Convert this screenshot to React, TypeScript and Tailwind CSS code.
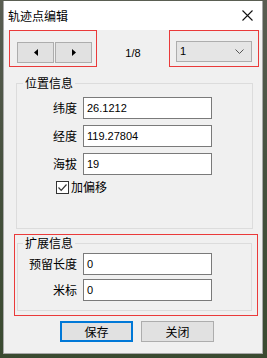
import React from "react";

const cjk = { fontFamily: '"Noto Sans CJK SC", "Microsoft YaHei", sans-serif' };
const lat = { fontFamily: '"Liberation Sans", Arial, sans-serif' };

function Field({ label, value, labelW }: { label: string; value: string; labelW: string }) {
  return (
    <div className="flex items-center h-[22px]">
      <div className={`${labelW} text-right text-[12px] leading-[16px] text-black`} style={cjk}>
        {label}
      </div>
      <div className="ml-[6px] w-[129px] h-[22px] bg-white border border-[#7a7a7a] flex items-center pl-[3px] text-[11px] text-black" style={lat}>
        {value}
      </div>
    </div>
  );
}

export default function App() {
  return (
    <div className="w-[267px] h-[358px] overflow-hidden bg-gradient-to-b from-[#5a5e52] via-[#45503d] to-[#3a4a30] pt-[1px] pl-[3px]">
      <div className="w-[260px] h-[353px] bg-[#f0f0f0] border-x border-b border-[#a8a8a8] flex flex-col">
        {/* Title bar */}
        <div className="h-[29px] bg-white flex items-center justify-between pl-[4px] pr-[9px] shrink-0">
          <span className="text-[12px] leading-[16px] text-black" style={cjk}>轨迹点编辑</span>
          <svg width="11" height="11" viewBox="0 0 11 11">
            <path d="M0.5 0.5 L10.5 10.5 M10.5 0.5 L0.5 10.5" stroke="#111" strokeWidth="1.1" />
          </svg>
        </div>

        {/* Row 1 */}
        <div className="flex items-start h-[37px] shrink-0">
          <div className="ml-[5px] w-[88px] h-[37px] border border-[#ea3a3a] flex pt-[11px] pl-[7px] gap-[1px]">
            <button className="w-[37px] h-[21px] bg-[#e1e1e1] border border-[#adadad] flex items-center justify-center">
              <svg width="4" height="7" viewBox="0 0 4 7"><path d="M4 0 L0 3.5 L4 7 Z" fill="#000" /></svg>
            </button>
            <button className="w-[37px] h-[21px] bg-[#e1e1e1] border border-[#adadad] flex items-center justify-center">
              <svg width="4" height="7" viewBox="0 0 4 7"><path d="M0 0 L4 3.5 L0 7 Z" fill="#000" /></svg>
            </button>
          </div>
          <div className="flex-1 h-[37px] flex items-center justify-center pt-[9px] text-[11px] text-black" style={lat}>
            1/8
          </div>
          <div className="mr-[3px] w-[90px] h-[37px] border border-[#ea3a3a] pt-[10px] pl-[6px]">
            <div className="w-[76px] h-[21px] bg-[#e5e5e5] border border-[#adadad] flex items-center justify-between pl-[3px] pr-[7px]">
              <span className="text-[11px] text-black" style={lat}>1</span>
              <svg width="9" height="5" viewBox="0 0 9 5">
                <path d="M0.5 0.5 L4.5 4.5 L8.5 0.5" stroke="#555" strokeWidth="1" fill="none" />
              </svg>
            </div>
          </div>
        </div>

        {/* Group 1 */}
        <fieldset className="ml-[12px] mt-[8px] w-[237px] h-[154px] border border-[#dcdcdc] shrink-0">
          <legend className="ml-[6px] px-[2px] text-[12px] leading-[16px] text-black" style={cjk}>位置信息</legend>
          <div className="flex flex-col gap-[6px] pt-[6px]">
            <Field label="纬度" value="26.1212" labelW="w-[60px]" />
            <Field label="经度" value="119.27804" labelW="w-[60px]" />
            <Field label="海拔" value="19" labelW="w-[60px]" />
          </div>
          <div className="flex items-center h-[16px] mt-[4px] ml-[39px]">
            <div className="w-[13px] h-[13px] border border-[#333] bg-white flex items-center justify-center">
              <svg width="11" height="11" viewBox="0 0 11 11">
                <path d="M1.5 5.5 L4.2 8.3 L9.5 2.5" stroke="#333" strokeWidth="1.2" fill="none" />
              </svg>
            </div>
            <span className="ml-[2px] text-[12px] leading-[16px] text-black" style={cjk}>加偏移</span>
          </div>
        </fieldset>

        {/* Group 2 */}
        <div className="ml-[10px] mt-[5px] w-[244px] h-[82px] border border-[#ea3a3a] pl-[2px] shrink-0">
          <fieldset className="w-[235px] h-[76px] border border-[#dcdcdc]">
            <legend className="ml-[5px] px-[2px] text-[12px] leading-[16px] text-black" style={cjk}>扩展信息</legend>
            <div className="flex flex-col gap-[4px] pt-[2px]">
              <Field label="预留长度" value="0" labelW="w-[59px]" />
              <Field label="米标" value="0" labelW="w-[59px]" />
            </div>
          </fieldset>
        </div>

        {/* Buttons */}
        <div className="flex gap-[8px] ml-[56px] mt-[5px]">
          <button className="w-[73px] h-[21px] bg-[#e1e1e1] border-2 border-[#0078d7] text-[12px] leading-[16px] text-black flex items-center justify-center" style={cjk}>
            保存
          </button>
          <button className="w-[73px] h-[21px] bg-[#e1e1e1] border border-[#adadad] text-[12px] leading-[16px] text-black flex items-center justify-center" style={cjk}>
            关闭
          </button>
        </div>
      </div>
    </div>
  );
}
